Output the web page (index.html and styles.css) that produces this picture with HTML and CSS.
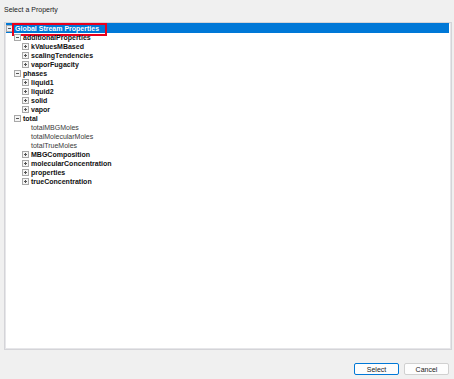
FILE: index.html
```html
<!DOCTYPE html>
<html lang="en">
<head>
    <meta charset="UTF-8">
    <title>Select a Property</title>
    <link rel="stylesheet" href="styles.css">
</head>
<body>
    <div class="dialog">
        <div class="title">Select a Property</div>
        <div class="tree-panel">
            <ul class="tree">
                <li>
                    <div class="row selected"><span class="tog minus"></span><span class="label">Global Stream Properties</span><span class="mark"></span></div>
                    <ul>
                        <li>
                            <div class="row"><span class="tog minus"></span><span class="label">additionalProperties</span></div>
                            <ul>
                                <li><div class="row"><span class="tog plus"></span><span class="label">kValuesMBased</span></div></li>
                                <li><div class="row"><span class="tog plus"></span><span class="label">scalingTendencies</span></div></li>
                                <li><div class="row"><span class="tog plus"></span><span class="label">vaporFugacity</span></div></li>
                            </ul>
                        </li>
                        <li>
                            <div class="row"><span class="tog minus"></span><span class="label">phases</span></div>
                            <ul>
                                <li><div class="row"><span class="tog plus"></span><span class="label">liquid1</span></div></li>
                                <li><div class="row"><span class="tog plus"></span><span class="label">liquid2</span></div></li>
                                <li><div class="row"><span class="tog plus"></span><span class="label">solid</span></div></li>
                                <li><div class="row"><span class="tog plus"></span><span class="label">vapor</span></div></li>
                            </ul>
                        </li>
                        <li>
                            <div class="row"><span class="tog minus"></span><span class="label">total</span></div>
                            <ul>
                                <li><div class="row leaf"><span class="label">totalMBGMoles</span></div></li>
                                <li><div class="row leaf"><span class="label">totalMolecularMoles</span></div></li>
                                <li><div class="row leaf"><span class="label">totalTrueMoles</span></div></li>
                                <li><div class="row"><span class="tog plus"></span><span class="label">MBGComposition</span></div></li>
                                <li><div class="row"><span class="tog plus"></span><span class="label">molecularConcentration</span></div></li>
                                <li><div class="row"><span class="tog plus"></span><span class="label">properties</span></div></li>
                                <li><div class="row"><span class="tog plus"></span><span class="label">trueConcentration</span></div></li>
                            </ul>
                        </li>
                    </ul>
                </li>
            </ul>
        </div>
        <div class="buttons">
            <button class="btn default">Select</button>
            <button class="btn">Cancel</button>
        </div>
    </div>
</body>
</html>
```
FILE: styles.css
```css
html, body {
    margin: 0;
    padding: 0;
    background: #f0f0f0;
}
.dialog {
    width: 454px;
    height: 379px;
    box-sizing: border-box;
    padding: 0 2px 0 4px;
    font-family: "Liberation Sans", Arial, sans-serif;
    color: #1a1a1a;
}
.title {
    height: 22px;
    line-height: 20px;
    font-size: 7px;
}
.tree-panel {
    height: 328px;
    box-sizing: border-box;
    background: #fff;
    border: 1px solid #d4d4d8;
    box-shadow: inset 0 0 0 1px #e6e6e9;
    padding: 0 2px 0 1px;
}
.tree, .tree ul {
    list-style: none;
    margin: 0;
    padding: 0;
}
.tree ul {
    padding-left: 8px;
}
.row {
    position: relative;
    display: flex;
    align-items: center;
    height: 9px;
    font-size: 7px;
    font-weight: bold;
    color: #111;
    white-space: nowrap;
}
.row.leaf {
    padding-left: 9px;
    font-weight: normal;
    color: #3a3a3a;
}
.row.selected {
    height: 10px;
    background: #0078d7;
    color: #fff;
}
.tog {
    position: relative;
    width: 5px;
    height: 5px;
    border: 1px solid #a8a8a8;
    background: #f4f4f4;
    margin-right: 2px;
    flex: none;
}
.tog::before {
    content: "";
    position: absolute;
    left: 1px;
    top: 2px;
    width: 3px;
    height: 1px;
    background: #555;
}
.tog.plus::after {
    content: "";
    position: absolute;
    left: 2px;
    top: 1px;
    width: 1px;
    height: 3px;
    background: #555;
}
.selected .tog {
    background: #e8eef6;
}
.mark {
    position: absolute;
    left: 6px;
    top: 0;
    width: 91px;
    height: 9px;
    border: 2px solid #e8001c;
}
.buttons {
    display: flex;
    justify-content: flex-end;
    gap: 5px;
    padding: 13px 3px 0 0;
}
.btn {
    width: 45px;
    height: 12px;
    padding: 0;
    font-family: "Liberation Sans", Arial, sans-serif;
    font-size: 7px;
    color: #222;
    background: #fdfdfd;
    border: 1px solid #d0d0d0;
    border-radius: 2px;
}
.btn.default {
    border-color: #0078d7;
}
```
